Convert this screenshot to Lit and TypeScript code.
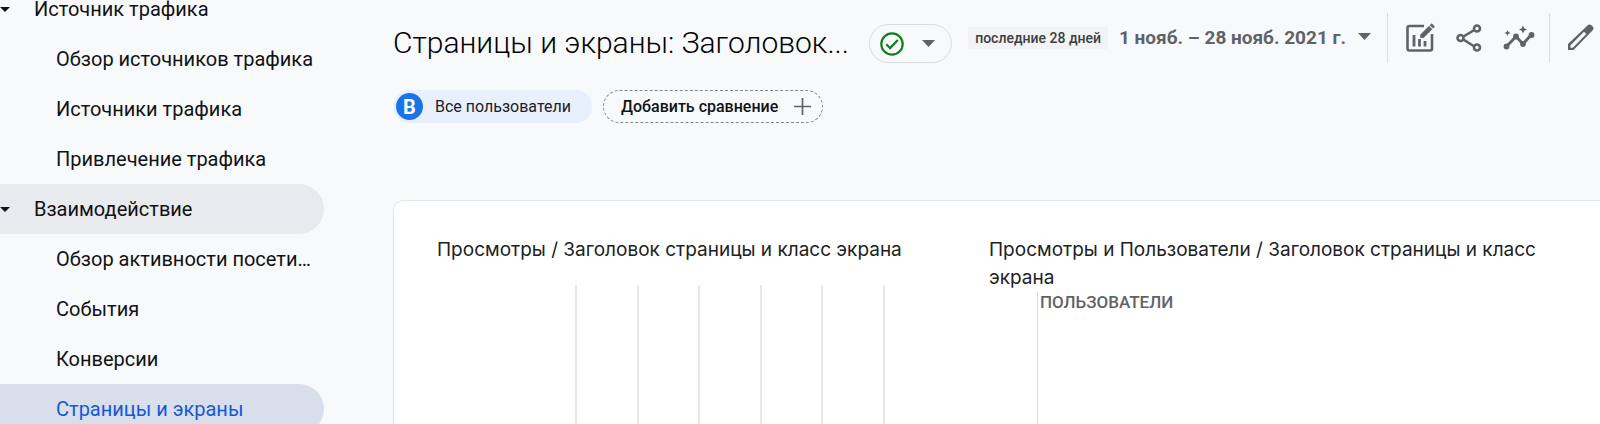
import { LitElement, html, css, svg } from 'lit';
import { customElement, property } from 'lit/decorators.js';
import { classMap } from 'lit/directives/class-map.js';

interface NavItem {
  label: string;
  group?: boolean;
  state?: 'open' | 'current';
}

const NAV: NavItem[] = [
  { label: 'Источник трафика', group: true },
  { label: 'Обзор источников трафика' },
  { label: 'Источники трафика' },
  { label: 'Привлечение трафика' },
  { label: 'Взаимодействие', group: true, state: 'open' },
  { label: 'Обзор активности посетителей' },
  { label: 'События' },
  { label: 'Конверсии' },
  { label: 'Страницы и экраны', state: 'current' },
];

const GRID_LINES = [0, 1, 2, 3, 4, 5];

const ICONS = {
  report: svg`
    <path d="M22 5H7.500a2 2 0 0 0-2 2v20.500a2 2 0 0 0 2 2h20.500a2 2 0 0 0 2-2V13" fill="none" stroke="currentColor" stroke-width="2.600"/>
    <path d="M12 14v11.500M17.500 18v7.500M23 20v5.500" fill="none" stroke="currentColor" stroke-width="2.800"/>
    <path d="M18.500 13.700 27 5.200l3 3-8.500 8.500h-3zM28 4.200l1-1a1 1 0 0 1 1.400 0l1.600 1.600a1 1 0 0 1 0 1.400l-1 1z" fill="currentColor" stroke="currentColor" stroke-width=".6"/>`,
  share: svg`
    <path d="M24 8 9 17l15 9.500" fill="none" stroke="currentColor" stroke-width="2.600"/>
    <g fill="#f8f9fb" stroke="currentColor" stroke-width="2.600">
      <circle cx="25" cy="7.500" r="3"/><circle cx="8.500" cy="17" r="3"/><circle cx="25" cy="26.500" r="3"/>
    </g>`,
  insights: svg`
    <path d="M4.500 25.500 14 15.500l7 7.500 8.500-9.500" fill="none" stroke="currentColor" stroke-width="2.800"/>
    <g fill="currentColor">
      <circle cx="4.500" cy="25.500" r="2.900"/><circle cx="14" cy="15.500" r="2.900"/>
      <circle cx="21" cy="23" r="2.900"/><circle cx="29.500" cy="14" r="2.900"/>
      <path d="m21 4.500 1.300 2.700 2.700 1.300-2.700 1.300-1.300 2.700-1.300-2.700L17 8.500l2.700-1.300zM5.500 9l.9 2.100 2.100.9-2.100.9-.9 2.100-.9-2.100-2.100-.9 2.100-.9z"/>
    </g>`,
  edit: svg`
    <path d="M5 29v-6L24.500 4.500a3 3 0 0 1 4.200 0l.8.800a3 3 0 0 1 0 4.200L10.500 29z" fill="currentColor"/>
    <path d="M7.500 26.700v-2.500L21 10.800l2.300 2.300L9.800 26.700z" fill="#f8f9fb"/>`,
};

@customElement('side-nav')
class SideNav extends LitElement {
  static styles = css`
    :host { display: block; overflow: hidden; }
    .list { list-style: none; margin: -16px 0 0; padding: 0; }
    .item {
      display: flex; align-items: center; box-sizing: border-box; height: 50px;
      padding: 0 6px 0 56px; border-radius: 0 25px 25px 0;
      font-size: 20px; line-height: 28px; color: #111214; text-decoration: none;
    }
    .group { padding-left: 0; gap: 24px; }
    .open { background: #e8eaed; }
    .current { background: #d8dfeb; color: #1558d6; }
    .label { overflow: hidden; text-overflow: ellipsis; white-space: nowrap; }
    .arrow { width: 10px; height: 5px; flex: none; fill: #111214; }
  `;
  render() {
    return html`<nav aria-label="Отчеты"><ul class="list">
      ${NAV.map(i => html`<li><a href="#" class=${classMap({
        item: true, group: !!i.group, open: i.state === 'open', current: i.state === 'current',
      })}>
        ${i.group ? html`<svg class="arrow" viewBox="0 0 10 5" aria-hidden="true"><path d="M0 0h10L5 5z"/></svg>` : ''}
        <span class="label">${i.label}</span></a></li>`)}
    </ul></nav>`;
  }
}

@customElement('icon-button')
class IconButton extends LitElement {
  @property() name: keyof typeof ICONS = 'edit';
  @property() label = '';
  static styles = css`
    :host { display: block; flex: none; }
    .button { display: block; padding: 0; border: 0; background: none; color: #5f6368; }
    .icon { display: block; width: 34px; height: 34px; }
  `;
  render() {
    return html`<button class="button" aria-label=${this.label}>
      <svg class="icon" viewBox="0 0 34 34" aria-hidden="true">${ICONS[this.name]}</svg></button>`;
  }
}

@customElement('report-header')
class ReportHeader extends LitElement {
  static styles = css`
    :host { display: block; }
    button { font: inherit; color: inherit; background: none; border: 0; padding: 0; }
    .bar { display: flex; align-items: flex-start; padding: 13px 3px 0 0; }
    .title {
      flex: 0 1 auto; min-width: 0; margin: 10px 0 0; overflow: hidden; text-overflow: ellipsis;
      white-space: nowrap; font-size: 30px; line-height: 40px; font-weight: 300; color: #000;
    }
    .bar .status {
      display: flex; align-items: center; gap: 18px; flex: none; box-sizing: border-box;
      width: 83px; height: 39px; margin: 11px 0 0 20px; padding-left: 10px;
      border: 1px solid #dadce0; border-radius: 20px;
    }
    .check { width: 24px; height: 24px; }
    .arrow { width: 13px; height: 7px; fill: #5f6368; }
    .tools { display: flex; align-items: center; height: 50px; margin-left: auto; flex: none; }
    .bar .date { display: flex; align-items: center; font-size: 19px; line-height: 22px; font-weight: 700; color: #5f6368; }
    .preset {
      margin-right: 11px; padding: 0 7px; background: #f1f3f4; color: #3c4043;
      font-size: 14px; font-weight: 500;
    }
    .date .arrow { margin: 0 16px 4px 12px; }
    .icons { display: flex; align-items: center; gap: 16px; height: 50px; padding: 0 13px 0 14px; border: solid #dadce0; border-width: 0 1px; }
    .edit { margin-left: 13px; }
    .chips { display: flex; gap: 11px; margin-top: 27px; font-size: 16px; line-height: 20px; color: #202124; }
    .chips .chip { display: flex; align-items: center; box-sizing: border-box; height: 33px; border-radius: 17px; }
    .chips .all { gap: 12px; padding: 0 21px 0 3px; background: #e8f0fe; color: #202124; }
    .badge {
      display: grid; place-items: center; width: 27px; height: 27px; border-radius: 50%;
      background: #1a73e8; color: #fff; font-size: 20px; font-weight: 700;
    }
    .chips .add { gap: 16px; padding: 0 11px 0 17px; border: 1px dashed #80868b; font-weight: 500; color: #111214; }
    .plus { width: 17px; height: 17px; }
  `;
  render() {
    const arrow = html`<svg class="arrow" viewBox="0 0 13 7" aria-hidden="true"><path d="M0 0h13L6.500 7z"/></svg>`;
    return html`
      <div class="bar">
        <h1 class="title">Страницы и экраны: Заголовок...</h1>
        <button class="status" aria-label="Статус данных">
          <svg class="check" viewBox="0 0 24 24" aria-hidden="true" fill="none" stroke="#137e1e">
            <circle cx="12" cy="12" r="10.700" stroke-width="2.200"/><path d="m6.200 12.200 3.900 3.900 7.700-8" stroke-width="2.200"/>
          </svg>${arrow}</button>
        <div class="tools">
          <button class="date"><span class="preset">последние 28 дней</span><span>1 нояб. – 28 нояб. 2021 г.</span>${arrow}</button>
          <div class="icons">
            <icon-button name="report" label="Настроить отчет"></icon-button>
            <icon-button name="share" label="Поделиться"></icon-button>
            <icon-button name="insights" label="Статистика"></icon-button>
          </div>
          <icon-button class="edit" name="edit" label="Изменить"></icon-button>
        </div>
      </div>
      <div class="chips">
        <button class="chip all"><span class="badge">B</span>Все пользователи</button>
        <button class="chip add">Добавить сравнение
          <svg class="plus" viewBox="0 0 17 17" aria-hidden="true"><path d="M8.500 0v17M0 8.500h17" stroke="#5f6368" stroke-width="1.700"/></svg>
        </button>
      </div>`;
  }
}

@customElement('report-charts')
class ReportCharts extends LitElement {
  static styles = css`
    :host {
      display: grid; grid-template-columns: 1fr 1fr; background: #fff;
      border: solid #e3e5e8; border-width: 1px 0 0 1px; border-radius: 10px 0 0 0;
      padding: 35px 59px 0 43px;
    }
    .panel { display: flex; flex-direction: column; min-width: 0; }
    .title { margin: 0; font: 400 19px/28px Inter, sans-serif; color: #202124; }
    .bars { flex: 1; display: flex; justify-content: space-between; margin: 21px 104px 0 138px; }
    .line { width: 2px; background: #e6e7ea; }
    .scatter { flex: 1; margin: 0 0 0 48px; padding: 1px 0 0 2px; border-left: 1px solid #dadce0; }
    .axis { font-size: 17px; line-height: 18px; font-weight: 500; color: #5f6368; text-transform: uppercase; }
  `;
  render() {
    return html`
      <section class="panel">
        <h2 class="title">Просмотры / Заголовок страницы и класс экрана</h2>
        <div class="bars">${GRID_LINES.map(() => html`<span class="line"></span>`)}</div>
      </section>
      <section class="panel">
        <h2 class="title">Просмотры и Пользователи / Заголовок страницы и класс экрана</h2>
        <div class="scatter"><div class="axis">Пользователи</div></div>
      </section>`;
  }
}

@customElement('app-root')
class AppRoot extends LitElement {
  static styles = css`
    :host {
      display: grid; grid-template-columns: 324px minmax(0, 1fr); column-gap: 69px;
      height: 100vh; overflow: hidden; background: #f8f9fb; font-family: Roboto, sans-serif;
    }
    .main { display: flex; flex-direction: column; gap: 77px; min-width: 0; }
    .charts { flex: 1; }
  `;
  render() {
    return html`<side-nav></side-nav>
      <main class="main"><report-header></report-header><report-charts class="charts"></report-charts></main>`;
  }
}
